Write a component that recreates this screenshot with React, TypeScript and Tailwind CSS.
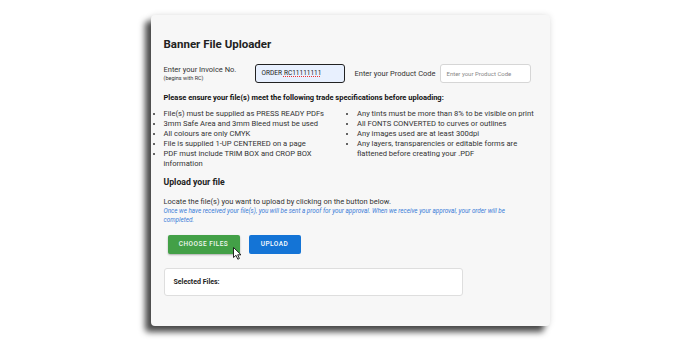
import React from 'react';

const leftSpecs = [
  'File(s) must be supplied as PRESS READY PDFs',
  '3mm Safe Area and 3mm Bleed must be used',
  'All colours are only CMYK',
  'File is supplied 1-UP CENTERED on a page',
  'PDF must include TRIM BOX and CROP BOX information',
];

const rightSpecs = [
  'Any tints must be more than 8% to be visible on print',
  'All FONTS CONVERTED to curves or outlines',
  'Any images used are at least 300dpi',
  'Any layers, transparencies or editable forms are flattened before creating your .PDF',
];

const SpecList = ({ items }: { items: string[] }) => (
  <ul className="list-disc pl-0 text-[7.6px] leading-[9.9px] text-[#333] marker:text-[#333]">
    {items.map((item) => (
      <li key={item}>{item}</li>
    ))}
  </ul>
);

const Cursor = () => (
  <svg className="absolute left-[65px] top-[12px]" width="9" height="13" viewBox="0 0 9 13">
    <path d="M0.5 0.5 L0.5 10.5 L3 8.3 L4.8 12.2 L6.4 11.5 L4.7 7.8 L8 7.8 Z" fill="#fff" stroke="#111" strokeWidth="0.9" strokeLinejoin="round" />
  </svg>
);

export default function App() {
  return (
    <div className="w-[700px] h-[340px] bg-white pt-[15px] font-['Roboto',sans-serif]">
      <div className="mx-auto w-[399px] rounded-[4px] bg-[#f7f7f7] px-[13px] pt-[22px] pb-[30px] shadow-[-6px_6px_6px_rgba(0,0,0,0.7),0_0_6px_rgba(0,0,0,0.12)]">
        <h2 className="text-[11.5px] leading-[14px] font-bold text-[#222]">Banner File Uploader</h2>

        <div className="mt-[13px] flex items-center">
          <div className="w-[91px] text-[#333]">
            <div className="text-[7.5px] leading-[9px]">Enter your Invoice No.</div>
            <div className="text-[5.5px] leading-[8px]">(begins with RC)</div>
          </div>
          <div className="flex h-[19px] w-[90px] items-center rounded-[3px] border border-[#222] bg-[#e8f0fe] px-[6px] text-[6.5px] text-[#222]">
            ORDER <span className="ml-[2px] underline decoration-dotted decoration-[#e33] underline-offset-[1px]">RC11111111</span>
          </div>
          <div className="ml-[10px] w-[85px] text-[7.5px] text-[#333]">Enter your Product Code</div>
          <div className="flex h-[19px] w-[91px] items-center rounded-[3px] border border-[#d6d6d6] bg-white px-[6px] text-[6px] text-[#888]">
            Enter your Product Code
          </div>
        </div>

        <p className="mt-[10px] text-[7.5px] leading-[10px] font-bold text-[#111]">
          Please ensure your file(s) meet the following trade specifications before uploading:
        </p>

        <div className="mt-[6px] grid grid-cols-2 gap-x-[14px]">
          <SpecList items={leftSpecs} />
          <SpecList items={rightSpecs} />
        </div>

        <h3 className="mt-[9px] text-[8.7px] leading-[11px] font-bold text-[#222]">Upload your file</h3>

        <p className="mt-[8.5px] text-[7.5px] leading-[9.9px] text-[#333]">
          Locate the file(s) you want to upload by clicking on the button below.
        </p>
        <p className="text-[6.3px] leading-[9.4px] italic text-[#3b7dd8]">
          Once we have received your file(s), you will be sent a proof for your approval. When we receive your approval, your order will be completed.
        </p>

        <div className="mt-[9.5px] ml-[4px] flex gap-[9px]">
          <div className="relative flex h-[19px] w-[72px] items-center justify-center rounded-[2px] bg-[#43a047] text-[6.5px] font-medium tracking-[0.5px] text-[#f1f8f1] shadow-[0_1px_2px_rgba(0,0,0,0.3)]">
            CHOOSE FILES
            <Cursor />
          </div>
          <div className="flex h-[19px] w-[52px] items-center justify-center rounded-[2px] bg-[#1474d6] text-[6.5px] font-medium tracking-[0.5px] text-white">
            UPLOAD
          </div>
        </div>

        <div className="mt-[14px] flex h-[28px] w-[299px] items-center rounded-[3px] border border-[#dedede] bg-white px-[9px] text-[7px] font-bold text-[#222]">
          Selected Files:
        </div>
      </div>
    </div>
  );
}
